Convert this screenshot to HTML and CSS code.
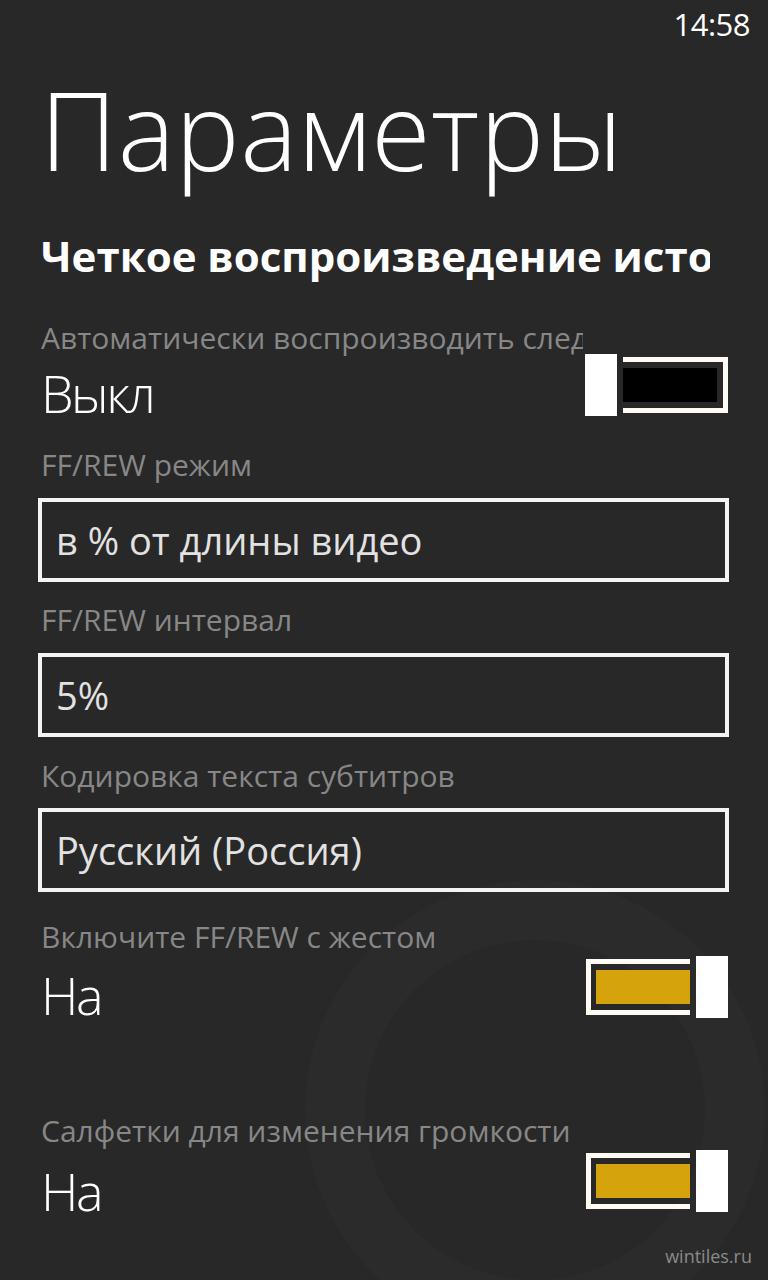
FILE: index.html
```html
<!DOCTYPE html>
<html lang="ru">
<head>
    <meta charset="UTF-8">
    <title>Параметры</title>
    <link rel="stylesheet" href="styles.css">
</head>
<body>
<div id="screen">
    <svg class="mark" width="768" height="1280" viewBox="0 0 768 1280">
        <circle cx="535" cy="1110" r="200" fill="none" stroke="#2b2b2b" stroke-width="60"/>
    </svg>

    <div id="status">
        <span class="time">14:58</span>
    </div>

    <h1 class="title">Параметры</h1>
    <h2 class="subtitle">Четкое воспроизведение источника</h2>

    <div class="setting s-auto">
        <div class="label">Автоматически воспроизводить следующее видео</div>
        <div class="row">
            <span class="value">Выкл</span>
            <div class="toggle off">
                <span class="thumb"></span>
                <span class="track"><span class="fill"></span></span>
            </div>
        </div>
    </div>

    <div class="setting s-mode">
        <div class="label">FF/REW режим</div>
        <div class="box">в % от длины видео</div>
    </div>

    <div class="setting s-step">
        <div class="label">FF/REW интервал</div>
        <div class="box">5%</div>
    </div>

    <div class="setting s-enc">
        <div class="label">Кодировка текста субтитров</div>
        <div class="box">Русский (Россия)</div>
    </div>

    <div class="setting s-gesture">
        <div class="label">Включите FF/REW с жестом</div>
        <div class="row">
            <span class="value">На</span>
            <div class="toggle on">
                <span class="track"><span class="fill"></span></span>
                <span class="thumb"></span>
            </div>
        </div>
    </div>

    <div class="setting s-volume">
        <div class="label">Салфетки для изменения громкости</div>
        <div class="row">
            <span class="value">На</span>
            <div class="toggle on">
                <span class="track"><span class="fill"></span></span>
                <span class="thumb"></span>
            </div>
        </div>
    </div>

    <span class="site">wintiles.ru</span>
</div>
</body>
</html>
```

FILE: styles.css
```css
* {
    padding: 0;
    margin: 0;
    box-sizing: border-box;
}

body {
    background: #282828;
    font-family: "Open Sans", "Noto Sans", sans-serif;
    color: #fff;
}

#screen {
    width: 768px;
    height: 1280px;
    position: relative;
    overflow: hidden;
    padding: 0 39px 0 38px;
}

.mark {
    position: absolute;
    left: 0;
    top: 0;
}

#status {
    position: relative;
    height: 48px;
    display: flex;
    justify-content: flex-end;
    margin-right: -21px;
}

.time {
    font-size: 31px;
    line-height: 48px;
    letter-spacing: -0.5px;
}

.title {
    position: relative;
    margin-top: 8px;
    padding-left: 2px;
    font-size: 108px;
    line-height: 148px;
    font-weight: 300;
    letter-spacing: 0.5px;
}

.subtitle {
    position: relative;
    margin-top: 23px;
    padding-left: 3px;
    width: 672px;
    overflow-x: clip;
    white-space: nowrap;
    font-size: 42px;
    line-height: 58px;
    font-weight: 700;
}

.setting {
    position: relative;
}

.label {
    padding-left: 3px;
    width: 545px;
    overflow-x: clip;
    white-space: nowrap;
    font-size: 30px;
    line-height: 42px;
    color: #878787;
}

.s-auto { margin-top: 32px; }
.s-mode { margin-top: 15px; }
.s-step { margin-top: 17px; }
.s-enc { margin-top: 18px; }
.s-gesture { margin-top: 24px; }
.s-volume { margin-top: 79px; }

.s-volume .label {
    width: 600px;
}

.row {
    display: flex;
    justify-content: space-between;
    align-items: flex-start;
}

.value {
    margin-top: -2px;
    padding-left: 3px;
    font-size: 52px;
    line-height: 72px;
    font-weight: 300;
    letter-spacing: -2.5px;
}

.s-gesture .value { margin-top: 1px; }
.s-volume .value { margin-top: 3px; }

.box {
    margin-top: 12px;
    height: 84px;
    border: 4px solid #f4f4f4;
    padding-left: 14px;
    font-size: 38px;
    line-height: 76px;
    color: #e2e2e2;
}

.s-enc .box { margin-top: 11px; }

.toggle {
    display: flex;
    align-items: center;
    gap: 6px;
    margin-right: 1px;
}

.s-auto .toggle { margin-top: -5px; }
.s-gesture .toggle { margin-top: -2px; }
.s-volume .toggle { margin-top: -2px; }

.thumb {
    display: block;
    width: 32px;
    height: 62px;
    background: #fff;
}

.track {
    display: block;
    width: 105px;
    height: 56px;
    border: 5px solid #fffbf2;
}

.off .track {
    border-left: none;
    padding: 6px 6px 6px 0;
}

.on .track {
    width: 104px;
    border-right: none;
    padding: 6px 0 6px 5px;
}

.fill {
    display: block;
    height: 100%;
}

.off .fill {
    background: #000;
}

.on .fill {
    background: #d5a30c;
}

.site {
    position: absolute;
    right: 16px;
    bottom: 12px;
    font-size: 18px;
    color: #8a8a8a;
}
```
